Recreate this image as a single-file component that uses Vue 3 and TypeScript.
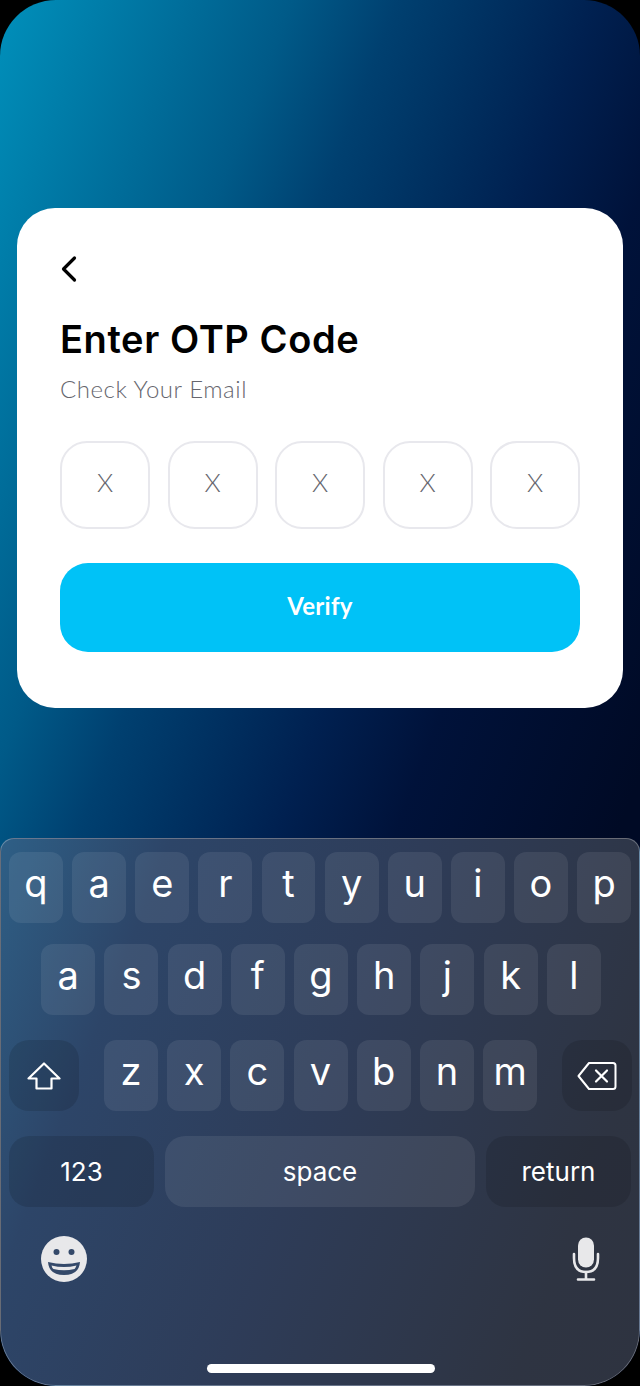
<template>
  <div class="screen">
    <section class="card">
      <button class="back" aria-label="Back">
        <svg width="18" height="28" viewBox="0 0 18 28" fill="none">
          <path d="M14.500 3 L3.500 14 L14.500 25" stroke="#000" stroke-width="3.200" stroke-linecap="round" stroke-linejoin="round" />
        </svg>
      </button>
      <h1 class="title">Enter OTP Code</h1>
      <p class="subtitle">Check Your Email</p>
      <div class="otp">
        <div v-for="n in 5" :key="n" class="otp-box">X</div>
      </div>
      <button class="verify">Verify</button>
    </section>

    <section class="keyboard">
      <div class="row row-top">
        <div v-for="(k, i) in rowOne" :key="i" class="key">{{ k }}</div>
      </div>
      <div class="row row-mid">
        <div v-for="k in rowTwo" :key="k" class="key">{{ k }}</div>
      </div>
      <div class="row row-third">
        <div class="key-dark shift">
          <svg width="34" height="28" viewBox="0 0 34 28" fill="none">
            <path d="M17 1.500 L32.500 16.500 H24.500 V26.500 H9.500 V16.500 H1.500 Z" stroke="#fff" stroke-width="2.200" stroke-linejoin="round" />
          </svg>
        </div>
        <div class="letters">
          <div v-for="k in rowThree" :key="k" class="key">{{ k }}</div>
        </div>
        <div class="key-dark del">
          <svg width="40" height="30" viewBox="0 0 40 30" fill="none">
            <path d="M12 2 H36 Q38.500 2 38.500 4.500 V25.500 Q38.500 28 36 28 H12 L1.500 15 Z" stroke="#fff" stroke-width="2" stroke-linejoin="round" />
            <path d="M19 9.500 L30 20.500 M30 9.500 L19 20.500" stroke="#fff" stroke-width="2.200" stroke-linecap="round" />
          </svg>
        </div>
      </div>
      <div class="row row-bottom">
        <div class="key-dark wide">123</div>
        <div class="key space">space</div>
        <div class="key-dark wide">return</div>
      </div>
      <div class="extras">
        <svg class="emoji" width="46" height="46" viewBox="0 0 46 46">
          <circle cx="23" cy="23" r="23" fill="#e8e8ea" />
          <circle cx="15.500" cy="16" r="3" fill="#34496a" />
          <circle cx="30.500" cy="16" r="3" fill="#34496a" />
          <path d="M7 26 Q23 30 39 26 Q38 39 23 39 Q8 39 7 26 Z" fill="#34496a" />
          <path d="M10.500 29.500 Q23 32.500 35.500 29.500 Q34.500 32 33.500 33 Q23 35.500 12.500 33 Q11 32 10.500 29.500 Z" fill="#e8e8ea" />
        </svg>
        <svg class="mic" width="28" height="44" viewBox="0 0 28 44" fill="none">
          <rect x="6" y="0.500" width="16" height="30" rx="8" fill="#e8e8ea" />
          <path d="M2 17 V21 Q2 35 14 35 Q26 35 26 21 V17" stroke="#e8e8ea" stroke-width="2.600" stroke-linecap="round" />
          <path d="M14 35 V42 M6 42.500 H22" stroke="#e8e8ea" stroke-width="2.600" stroke-linecap="round" />
        </svg>
      </div>
      <div class="home-bar"></div>
    </section>
  </div>
</template>

<script setup lang="ts">
const rowOne = ['q', 'a', 'e', 'r', 't', 'y', 'u', 'i', 'o', 'p']
const rowTwo = ['a', 's', 'd', 'f', 'g', 'h', 'j', 'k', 'l']
const rowThree = ['z', 'x', 'c', 'v', 'b', 'n', 'm']
</script>

<style>
html,
body {
  background: #000;
}
</style>

<style scoped>
.screen {
  width: 640px;
  height: 1386px;
  overflow: hidden;
  border-radius: 56px;
  background: linear-gradient(111deg, #0090bb 0%, #005a88 25%, #004070 34%, #002050 51%, #00123a 61%, #000a25 80%, #000a25 100%);
  display: flex;
  flex-direction: column;
  font-family: 'Lato', 'Inter', sans-serif;
}

.card {
  margin: 208px 17px 0;
  height: 500px;
  box-sizing: border-box;
  padding: 47px 43px 0;
  background: #fff;
  border-radius: 38px;
}

.back {
  display: block;
  width: 18px;
  height: 30px;
  padding: 0;
  border: 0;
  background: none;
}

.title {
  margin: 29px 0 0;
  font-family: 'Inter', sans-serif;
  font-size: 38px;
  line-height: 50px;
  font-weight: 600;
  letter-spacing: 0.6px;
  color: #000;
}

.subtitle {
  margin: 10px 0 0;
  font-size: 24px;
  line-height: 30px;
  font-weight: 300;
  letter-spacing: 0.55px;
  color: #66666e;
}

.otp {
  margin-top: 37px;
  display: flex;
  justify-content: space-between;
}

.otp-box {
  width: 90px;
  height: 88px;
  box-sizing: border-box;
  border: 2px solid #e8e8ed;
  border-radius: 27px;
  display: flex;
  align-items: center;
  justify-content: center;
  padding-bottom: 7px;
  font-size: 26px;
  font-weight: 300;
  color: #66666e;
}

.verify {
  display: block;
  width: 100%;
  height: 89px;
  margin-top: 34px;
  padding-bottom: 5px;
  border: 0;
  border-radius: 28px;
  background: #00c2f7;
  color: #fff;
  font-family: inherit;
  font-size: 24px;
  font-weight: 700;
  letter-spacing: 0.3px;
}

.keyboard {
  margin-top: 130px;
  flex: 1;
  box-sizing: border-box;
  padding: 13px 8px 0;
  border: 1px solid rgba(255, 255, 255, 0.28);
  border-radius: 14px 14px 56px 56px;
  background: linear-gradient(111deg, #2e5f86 0%, #2d4568 20%, #2e3c58 50%, #2e3442 85%, #2e3340 100%);
  font-family: 'Inter', sans-serif;
  color: #fff;
  display: flex;
  flex-direction: column;
}

.row {
  display: flex;
}

.row-top {
  gap: 9.200px;
}

.row-mid {
  margin-top: 21px;
  padding-left: 2px;
  justify-content: center;
  gap: 9.200px;
}

.row-third {
  margin-top: 25px;
  margin-right: -1px;
  justify-content: space-between;
}

.row-bottom {
  margin-top: 25px;
  gap: 11px;
}

.letters {
  display: flex;
  gap: 9.200px;
}

.key,
.key-dark {
  height: 71px;
  display: flex;
  align-items: center;
  justify-content: center;
}

.key {
  width: 54px;
  padding-bottom: 9px;
  box-sizing: border-box;
  border-radius: 12px;
  background: rgba(255, 255, 255, 0.08);
  font-size: 38px;
}

.key-dark {
  background: rgba(0, 0, 0, 0.12);
  border-radius: 20px;
}

.shift,
.del {
  width: 70px;
}

.wide {
  width: 145px;
  font-size: 26px;
}

.key.space {
  width: 310px;
  border-radius: 20px;
  padding-bottom: 0;
  font-size: 26px;
}

.extras {
  margin-top: 29px;
  padding: 0 31px 0 32px;
  display: flex;
  justify-content: space-between;
  align-items: center;
}

.home-bar {
  width: 228px;
  height: 9px;
  margin: auto auto 12px;
  transform: translateX(1px);
  border-radius: 5px;
  background: #fff;
}
</style>
